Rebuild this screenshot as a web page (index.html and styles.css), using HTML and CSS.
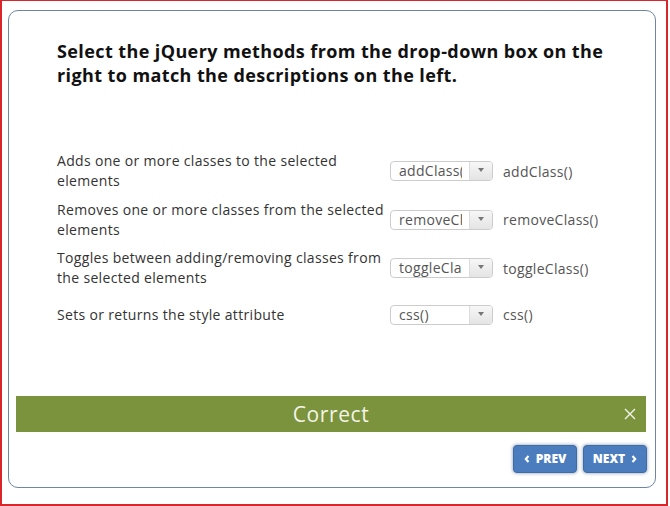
FILE: index.html
```html
<!DOCTYPE html>
<html>
<head>
<meta charset="utf-8">
<link rel="stylesheet" href="styles.css">
</head>
<body>
<div class="frame">
  <div class="card">
    <h1 class="title">Select the jQuery methods from the drop-down box on the right to match the descriptions on the left.</h1>
    <div class="rows">
      <div class="row">
        <div class="desc">Adds one or more classes to the selected elements</div>
        <div class="select"><span class="sel-text">addClass()</span><span class="sel-btn"><span class="tri"></span></span></div>
        <div class="answer">addClass()</div>
      </div>
      <div class="row">
        <div class="desc">Removes one or more classes from the selected elements</div>
        <div class="select"><span class="sel-text">removeClass()</span><span class="sel-btn"><span class="tri"></span></span></div>
        <div class="answer">removeClass()</div>
      </div>
      <div class="row">
        <div class="desc">Toggles between adding/removing classes from the selected elements</div>
        <div class="select"><span class="sel-text">toggleClass()</span><span class="sel-btn"><span class="tri"></span></span></div>
        <div class="answer">toggleClass()</div>
      </div>
      <div class="row row-last">
        <div class="desc">Sets or returns the style attribute</div>
        <div class="select"><span class="sel-text">css()</span><span class="sel-btn"><span class="tri"></span></span></div>
        <div class="answer">css()</div>
      </div>
    </div>
    <div class="feedback">
      <span class="fb-text">Correct</span>
      <svg class="close" width="12" height="12" viewBox="0 0 12 12"><path d="M1 1 L11 11 M11 1 L1 11" stroke="#f4f4ec" stroke-width="1.4" fill="none"/></svg>
    </div>
    <div class="nav">
      <button class="btn"><svg width="6" height="8" viewBox="0 0 6 8"><path d="M4.5 1 L1.8 4 L4.5 7" stroke="#fff" stroke-width="2.1" fill="none"/></svg>PREV</button>
      <button class="btn">NEXT<svg width="6" height="8" viewBox="0 0 6 8"><path d="M1.5 1 L4.2 4 L1.5 7" stroke="#fff" stroke-width="2.1" fill="none"/></svg></button>
    </div>
  </div>
</div>
</body>
</html>
```
FILE: styles.css
```css
html, body { margin: 0; padding: 0; background: #fff; }
body { font-family: "Open Sans", "Noto Sans", sans-serif; }
.frame {
  box-sizing: border-box;
  width: 668px;
  height: 506px;
  border: 2px solid #d9262a;
  border-top-width: 1px;
  padding: 9px 0 0 6px;
}
.card {
  box-sizing: border-box;
  width: 648px;
  height: 478px;
  border: 1px solid #6f85a1;
  border-radius: 10px;
  display: flex;
  flex-direction: column;
}
.title {
  margin: 28px 30px 0 48px;
  font-size: 18px;
  line-height: 24px;
  font-weight: 700;
  letter-spacing: 0.4px;
  color: #111;
}
.rows {
  margin: 60px 0 0 48px;
  display: flex;
  flex-direction: column;
}
.row {
  height: 48.5px;
  display: flex;
  align-items: center;
}
.row-last { height: 44px; }
.desc {
  box-sizing: border-box;
  width: 333px;
  padding-right: 4px;
  font-size: 14px;
  line-height: 20px;
  letter-spacing: 0.33px;
  color: #333;
}
.select {
  box-sizing: border-box;
  width: 103px;
  height: 20px;
  border: 1px solid #ccc;
  border-radius: 4px;
  display: flex;
  overflow: hidden;
  background: #fff;
  padding-left: 8px;
}
.sel-text {
  flex: 1;
  min-width: 0;
  margin-right: 7px;
  overflow: hidden;
  white-space: nowrap;
  font-size: 14px;
  line-height: 18px;
  letter-spacing: 0.3px;
  color: #555;
}
.sel-btn {
  width: 22px;
  border-left: 1px solid #ddd;
  background: linear-gradient(#f7f7f7, #e4e4e4);
  display: flex;
  align-items: center;
  justify-content: center;
}
.tri {
  width: 0; height: 0;
  border-left: 3px solid transparent;
  border-right: 3px solid transparent;
  border-top: 4px solid #777;
  margin-top: -2px;
}
.answer {
  margin-left: 10px;
  font-size: 14px;
  letter-spacing: 0.3px;
  color: #555;
}
.feedback {
  margin: 59px 0 0 7px;
  width: 630px;
  height: 36px;
  background: #7a933c;
  display: flex;
  align-items: center;
  justify-content: center;
  position: relative;
}
.fb-text {
  font-size: 21px;
  letter-spacing: 0.6px;
  color: #f4f4e8;
}
.close {
  position: absolute;
  right: 10px;
  top: 12px;
}
.nav {
  margin: 13px 0 0 0;
  padding-right: 8px;
  display: flex;
  justify-content: flex-end;
  gap: 6px;
}
.btn {
  box-sizing: border-box;
  width: 64px;
  height: 28px;
  border: 1px solid #3e6ca8;
  border-radius: 4px;
  background: #4b7dbe;
  box-shadow: 0 0 3px 1px rgba(90, 110, 140, 0.45);
  color: #fff;
  font-family: "Open Sans", sans-serif;
  font-weight: 800;
  font-size: 12px;
  display: flex;
  align-items: center;
  justify-content: center;
  gap: 6px;
  padding: 0;
}
```
